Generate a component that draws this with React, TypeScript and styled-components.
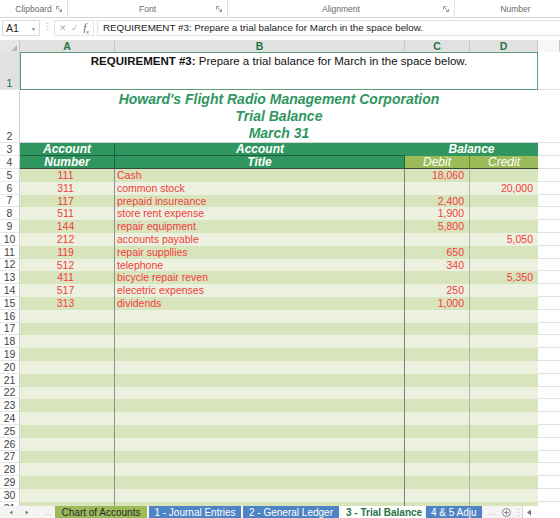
import styled, { createGlobalStyle } from "styled-components";

const GlobalStyle = createGlobalStyle`
  html, body {
    margin: 0;
    padding: 0;
    background: #fff;
  }
  body {
    font-family: "Liberation Sans", Arial, sans-serif;
  }
  * {
    box-sizing: border-box;
  }
`;

const accounts = [
  { no: "111", title: "Cash", debit: "18,060", credit: "" },
  { no: "311", title: "common stock", debit: "", credit: "20,000" },
  { no: "117", title: "prepaid insureance", debit: "2,400", credit: "" },
  { no: "511", title: "store rent expense", debit: "1,900", credit: "" },
  { no: "144", title: "repair equipment", debit: "5,800", credit: "" },
  { no: "212", title: "accounts payable", debit: "", credit: "5,050" },
  { no: "119", title: "repair suppllies", debit: "650", credit: "" },
  { no: "512", title: "telephone", debit: "340", credit: "" },
  { no: "411", title: "bicycle repair reven", debit: "", credit: "5,350" },
  { no: "517", title: "elecetric expenses", debit: "250", credit: "" },
  { no: "313", title: "dividends", debit: "1,000", credit: "" },
];

const ribbonGroups = [
  { label: "Clipboard", w: 68 },
  { label: "Font", w: 160 },
  { label: "Alignment", w: 227 },
  { label: "Number", w: 122 },
];

const tabs = [
  { name: "Chart of Accounts", w: 92, kind: "green" },
  { name: "1 - Journal Entries", w: 92, kind: "blue" },
  { name: "2 - General Ledger", w: 96, kind: "blue" },
  { name: "3 - Trial Balance", w: 84, kind: "active" },
  { name: "4 & 5 Adju", w: 56, kind: "blue" },
];

const GREEN = "#30965f";
const OLIVE = "#9bbb59";
const DARK_ROW = "#d8e4bc";
const LIGHT_ROW = "#ebf1de";
const RED = "#f23c3c";
const TOTAL_ROWS = 27;

const Launcher = () => (
  <svg width="6" height="6" viewBox="0 0 6 6">
    <path d="M0.5 0.5h3M0.5 0.5v3" stroke="#9a9a9a" strokeWidth="1" fill="none" />
    <path d="M1.5 1.5L5.5 5.5M5.5 3v2.5H3" stroke="#9a9a9a" strokeWidth="1" fill="none" />
  </svg>
);

const Arrow = ({ dir, color }: { dir: "left" | "right"; color: string }) => (
  <svg width="6" height="7" viewBox="0 0 6 7">
    <path d={dir === "left" ? "M5 0.5L1 3.5L5 6.5Z" : "M1 0.5L5 3.5L1 6.5Z"} fill={color} />
  </svg>
);

const App = () => {
  return (
    <Page>
      <GlobalStyle />
      <RibbonStrip>
        {ribbonGroups.map((g) => (
          <RibbonGroup key={g.label} $w={g.w}>
            <span />
            <span>{g.label}</span>
            <LauncherSlot>
              <Launcher />
            </LauncherSlot>
          </RibbonGroup>
        ))}
      </RibbonStrip>

      <FormulaRow>
        <NameBox>
          <span>A1</span>
          <Caret>▾</Caret>
        </NameBox>
        <Dots>⋮</Dots>
        <FxBox>
          <FxGlyph>✕</FxGlyph>
          <FxGlyph>✓</FxGlyph>
          <FxLetter>
            f<sub>x</sub>
          </FxLetter>
        </FxBox>
        <FormulaInput>
          REQUIREMENT #3: Prepare a trial balance for March in the space below.
        </FormulaInput>
      </FormulaRow>

      <Sheet>
        <SheetRow $h={12}>
          <Corner>
            <svg width="6" height="6" viewBox="0 0 6 6">
              <path d="M6 0V6H0Z" fill="#b8b8b8" />
            </svg>
          </Corner>
          <ColHead $sel>A</ColHead>
          <ColHead $sel>B</ColHead>
          <ColHead $sel>C</ColHead>
          <ColHead $sel>D</ColHead>
          <ColHead />
        </SheetRow>

        <SheetRow $h={38}>
          <RowHead $sel>1</RowHead>
          <Requirement>
            <b>REQUIREMENT #3:</b> Prepare a trial balance for March in the space below.
          </Requirement>
          <Blank />
        </SheetRow>

        <SheetRow $h={53}>
          <RowHead>2</RowHead>
          <TitleBlock>
            <div>Howard's Flight Radio Management Corporation</div>
            <div>Trial Balance</div>
            <div>March 31</div>
          </TitleBlock>
          <Blank />
        </SheetRow>

        <SheetRow $h={13}>
          <RowHead>3</RowHead>
          <HeadCell $bg={GREEN} $right="#1f5f3f" $bottom="#1f5f3f">
            Account
          </HeadCell>
          <HeadCell $bg={GREEN} $bottom="#1f5f3f">
            Account
          </HeadCell>
          <HeadCell $bg={GREEN} $span={2}>
            Balance
          </HeadCell>
          <Blank />
        </SheetRow>

        <SheetRow $h={13}>
          <RowHead>4</RowHead>
          <HeadCell $bg={GREEN} $right="#1f5f3f" $bottom="#3a4a3a">
            Number
          </HeadCell>
          <HeadCell $bg={GREEN} $right="#2d5b3d" $bottom="#3a4a3a">
            Title
          </HeadCell>
          <HeadCell $bg={OLIVE} $light $right="#6f8a3a" $bottom="#3a4a3a">
            Debit
          </HeadCell>
          <HeadCell $bg={OLIVE} $light $bottom="#3a4a3a">
            Credit
          </HeadCell>
          <Blank />
        </SheetRow>

        {Array.from({ length: TOTAL_ROWS }).map((_, i) => {
          const a = accounts[i];
          const bg = i % 2 === 0 ? DARK_ROW : LIGHT_ROW;
          return (
            <SheetRow key={i} $h={12.8}>
              <RowHead>{i + 5}</RowHead>
              <DataCell $bg={bg} $align="center" $line="#8f8f8f">
                {a?.no}
              </DataCell>
              <DataCell $bg={bg} $align="left" $line="#7f7f7f">
                {a?.title}
              </DataCell>
              <DataCell $bg={bg} $align="right" $line="#b0b0b0">
                {a?.debit}
              </DataCell>
              <DataCell $bg={bg} $align="right">
                {a?.credit}
              </DataCell>
              <Blank />
            </SheetRow>
          );
        })}
      </Sheet>

      <TabBar>
        <NavArea>
          <Arrow dir="left" color="#5f7f6a" />
          <Arrow dir="right" color="#5f7f6a" />
          <Ellipsis>…</Ellipsis>
        </NavArea>
        {tabs.map((t) => (
          <SheetTab key={t.name} $w={t.w} $kind={t.kind}>
            {t.name}
          </SheetTab>
        ))}
        <Ellipsis>…</Ellipsis>
        <AddSheet>
          <svg width="9" height="9" viewBox="0 0 9 9">
            <circle cx="4.5" cy="4.5" r="4" stroke="#8a8a8a" fill="none" />
            <path d="M4.5 2.2v4.6M2.2 4.5h4.6" stroke="#8a8a8a" />
          </svg>
        </AddSheet>
        <Dots>⋮</Dots>
        <ScrollStub>
          <Arrow dir="left" color="#777" />
        </ScrollStub>
      </TabBar>
    </Page>
  );
};

const Page = styled.div`
  width: 560px;
  height: 518px;
  overflow: hidden;
  display: flex;
  flex-direction: column;
  background: #fff;
`;

const RibbonStrip = styled.div`
  height: 18px;
  flex-shrink: 0;
  display: flex;
  border-bottom: 1px solid #d6d6d6;
`;

const RibbonGroup = styled.div<{ $w: number }>`
  width: ${(p) => p.$w}px;
  flex-shrink: 0;
  display: grid;
  grid-template-columns: 1fr auto 1fr;
  align-items: center;
  font-size: 8.5px;
  color: #6a6a6a;
  border-right: 1px solid #e2e2e2;
`;

const LauncherSlot = styled.span`
  justify-self: end;
  display: flex;
  margin-right: 5px;
`;

const FormulaRow = styled.div`
  height: 22px;
  flex-shrink: 0;
  display: flex;
  align-items: flex-start;
  padding: 2px 0 0 2px;
  gap: 3px;
`;

const NameBox = styled.div`
  width: 38px;
  height: 16px;
  border: 1px solid #dadada;
  display: flex;
  align-items: center;
  justify-content: space-between;
  padding: 0 4px 0 3px;
  font-size: 10.5px;
  color: #222;
`;

const Caret = styled.span`
  font-size: 6px;
  color: #888;
`;

const Dots = styled.span`
  width: 8px;
  flex-shrink: 0;
  text-align: center;
  font-size: 9px;
  line-height: 14px;
  color: #b0b0b0;
`;

const FxBox = styled.div`
  width: 40px;
  height: 16px;
  border: 1px solid #e2e2e2;
  display: flex;
  align-items: center;
  justify-content: space-around;
  padding: 0 2px;
`;

const FxGlyph = styled.span`
  font-size: 9px;
  color: #b4b4b4;
`;

const FxLetter = styled.span`
  font-family: "Liberation Serif", serif;
  font-style: italic;
  font-size: 10px;
  color: #555;
  sub {
    font-size: 6px;
  }
`;

const FormulaInput = styled.div`
  flex: 1;
  height: 16px;
  border: 1px solid #e2e2e2;
  border-right: none;
  padding-left: 5px;
  font-size: 9.8px;
  line-height: 14px;
  color: #222;
  white-space: nowrap;
  overflow: hidden;
`;

const Sheet = styled.div`
  flex: 1;
  overflow: hidden;
  display: flex;
  flex-direction: column;
`;

const SheetRow = styled.div<{ $h: number }>`
  display: grid;
  grid-template-columns: 20px 95px 290px 65px 68px 22px;
  height: ${(p) => p.$h}px;
  flex-shrink: 0;
`;

const Corner = styled.div`
  background: #e6e6e6;
  border-right: 1px solid #c6c6c6;
  display: flex;
  align-items: flex-end;
  justify-content: flex-end;
  padding: 0 2px 2px 0;
`;

const ColHead = styled.div<{ $sel?: boolean }>`
  background: ${(p) => (p.$sel ? "#e1e1e1" : "#f7f7f7")};
  border-right: 1px solid #c8c8c8;
  border-bottom: 1px solid ${(p) => (p.$sel ? "#6aa886" : "#d4d4d4")};
  color: #217346;
  font-size: 10.5px;
  font-weight: bold;
  line-height: 12px;
  text-align: center;
`;

const RowHead = styled.div<{ $sel?: boolean }>`
  display: flex;
  align-items: flex-end;
  justify-content: center;
  background: ${(p) => (p.$sel ? "#e1e1e1" : "#fff")};
  color: ${(p) => (p.$sel ? "#217346" : "#444")};
  border-right: 1px solid #cfcfcf;
  border-bottom: 1px solid #e6e6e6;
  font-size: 10.5px;
  line-height: 12px;
  overflow: hidden;
`;

const Requirement = styled.div`
  grid-column: span 4;
  border: 1px solid #5a9e78;
  text-align: center;
  font-size: 11.5px;
  line-height: 14px;
  padding-top: 1px;
  color: #111;
  white-space: nowrap;
`;

const TitleBlock = styled.div`
  grid-column: span 4;
  display: flex;
  flex-direction: column;
  justify-content: flex-end;
  align-items: center;
  font-size: 14px;
  line-height: 17px;
  font-weight: bold;
  font-style: italic;
  color: ${GREEN};
  border-bottom: 1px solid #d4d4d4;
  white-space: nowrap;
`;

const Blank = styled.div`
  background: #fff;
  border-bottom: 1px solid #e0e0e0;
`;

const HeadCell = styled.div<{
  $bg: string;
  $span?: number;
  $right?: string;
  $bottom?: string;
  $light?: boolean;
}>`
  grid-column: span ${(p) => p.$span ?? 1};
  background: ${(p) => p.$bg};
  border-right: ${(p) => (p.$right ? `1px solid ${p.$right}` : "none")};
  border-bottom: ${(p) => (p.$bottom ? `1px solid ${p.$bottom}` : "none")};
  color: #fff;
  font-size: 12px;
  line-height: 12px;
  font-style: italic;
  font-weight: ${(p) => (p.$light ? "normal" : "bold")};
  text-align: center;
  white-space: nowrap;
  overflow: hidden;
`;

const DataCell = styled.div<{ $bg: string; $align: string; $line?: string }>`
  background: ${(p) => p.$bg};
  border-right: ${(p) => (p.$line ? `1px solid ${p.$line}` : "none")};
  text-align: ${(p) => p.$align};
  padding: 0 5px 0 2px;
  color: ${RED};
  font-size: 10.5px;
  line-height: 12.8px;
  white-space: nowrap;
  overflow: hidden;
`;

const TabBar = styled.div`
  height: 12px;
  flex-shrink: 0;
  display: flex;
  align-items: stretch;
  background: #f4f4f4;
  font-size: 10px;
  line-height: 13px;
  overflow: hidden;
`;

const NavArea = styled.div`
  width: 55px;
  flex-shrink: 0;
  display: flex;
  align-items: center;
  gap: 12px;
  padding-left: 9px;
`;

const Ellipsis = styled.span`
  width: 14px;
  flex-shrink: 0;
  text-align: center;
  color: #a0a0a0;
  font-size: 8px;
`;

const SheetTab = styled.div<{ $w: number; $kind: string }>`
  width: ${(p) => p.$w}px;
  flex-shrink: 0;
  margin-right: ${(p) => (p.$kind === "active" ? 1 : 2)}px;
  padding: 0 5px;
  white-space: nowrap;
  overflow: hidden;
  background: ${(p) =>
    p.$kind === "green" ? OLIVE : p.$kind === "blue" ? "#4f84c4" : "#fff"};
  color: ${(p) =>
    p.$kind === "green" ? "#2a2a2a" : p.$kind === "blue" ? "#fff" : "#217346"};
  font-weight: ${(p) => (p.$kind === "active" ? "bold" : "normal")};
  text-align: ${(p) => (p.$w < 60 ? "left" : "center")};
`;

const AddSheet = styled.span`
  width: 16px;
  flex-shrink: 0;
  display: flex;
  align-items: center;
  justify-content: center;
`;

const ScrollStub = styled.div`
  flex: 1;
  display: flex;
  align-items: center;
  padding-left: 3px;
  border-left: 1px solid #d4d4d4;
  background: #fff;
`;

export default App;
